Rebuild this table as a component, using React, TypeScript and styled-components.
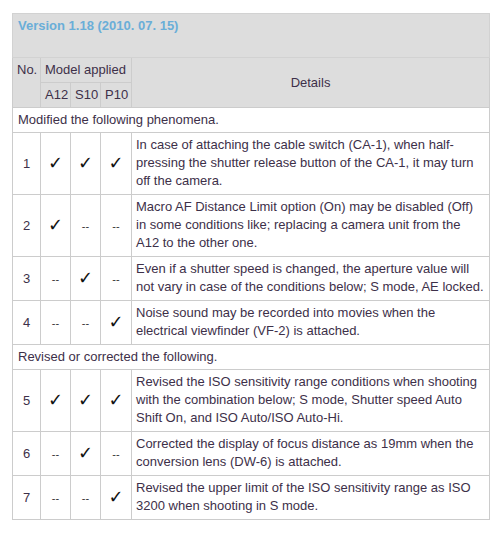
import styled, { createGlobalStyle } from 'styled-components'

const GlobalStyle = createGlobalStyle`
  body {
    margin: 0;
    background: #ffffff;
    font-family: 'Liberation Sans', Arial, sans-serif;
  }
`

const Page = styled.div`
  padding: 13px 12px 0 12px;
`

const Table = styled.table`
  width: 477px;
  table-layout: fixed;
  border-collapse: collapse;
  font-family: 'Liberation Sans', Arial, sans-serif;
  font-size: 13px;
  line-height: 18px;
  color: #3d3049;
`

const Col = styled.col<{ $w: number }>`
  width: ${(p) => p.$w}px;
`

const VersionCell = styled.th`
  box-sizing: border-box;
  background: #dddddd;
  border: 1px solid #d2d2d2;
  height: 44px;
  padding: 3px 5px 0 5px;
  vertical-align: top;
  text-align: left;
  color: #6aaed8;
  font-weight: bold;
  font-size: 13px;
`

const HeadCell = styled.th<{ $align?: string; $valign?: string }>`
  box-sizing: border-box;
  background: #dddddd;
  border: 1px solid #cccccc;
  font-weight: normal;
  height: 25px;
  padding: ${(p) => (p.$valign === 'top' ? '3px 4px 0 4px' : '0 4px')};
  text-align: ${(p) => p.$align || 'left'};
  vertical-align: ${(p) => p.$valign || 'middle'};
  white-space: nowrap;
`

const SectionCell = styled.td`
  border: 1px solid #cccccc;
  padding: 3px 5px 3px 5px;
  height: 18px;
`

const NumCell = styled.td`
  border: 1px solid #cccccc;
  text-align: center;
  vertical-align: middle;
  padding: 0;
`

const MarkCell = styled.td`
  border: 1px solid #cccccc;
  text-align: center;
  vertical-align: middle;
  padding: 0;
`

const Check = styled.span`
  font-family: 'DejaVu Sans', sans-serif;
  font-size: 18px;
  color: #111111;
`

const Dash = styled.span`
  font-size: 11px;
  color: #333333;
`

const DetailCell = styled.td`
  border: 1px solid #cccccc;
  padding: 3px 3px 4px 4px;
  vertical-align: top;
`

type Row = { no: number; marks: boolean[]; text: string }

const modified: Row[] = [
  {
    no: 1,
    marks: [true, true, true],
    text: 'In case of attaching the cable switch (CA-1), when half-pressing the shutter release button of the CA-1, it may turn off the camera.',
  },
  {
    no: 2,
    marks: [true, false, false],
    text: 'Macro AF Distance Limit option (On) may be disabled (Off) in some conditions like; replacing a camera unit from the A12 to the other one.',
  },
  {
    no: 3,
    marks: [false, true, false],
    text: 'Even if a shutter speed is changed, the aperture value will not vary in case of the conditions below; S mode, AE locked.',
  },
  {
    no: 4,
    marks: [false, false, true],
    text: 'Noise sound may be recorded into movies when the electrical viewfinder (VF-2) is attached.',
  },
]

const revised: Row[] = [
  {
    no: 5,
    marks: [true, true, true],
    text: 'Revised the ISO sensitivity range conditions when shooting with the combination below; S mode, Shutter speed Auto Shift On, and ISO Auto/ISO Auto-Hi.',
  },
  {
    no: 6,
    marks: [false, true, false],
    text: 'Corrected the display of focus distance as 19mm when the conversion lens (DW-6) is attached.',
  },
  {
    no: 7,
    marks: [false, false, true],
    text: 'Revised the upper limit of the ISO sensitivity range as ISO 3200 when shooting in S mode.',
  },
]

const ItemRow = ({ row }: { row: Row }) => (
  <tr>
    <NumCell>{row.no}</NumCell>
    {row.marks.map((m, i) => (
      <MarkCell key={i}>{m ? <Check>✓</Check> : <Dash>--</Dash>}</MarkCell>
    ))}
    <DetailCell>{row.text}</DetailCell>
  </tr>
)

export default function App() {
  return (
    <Page>
      <GlobalStyle />
      <Table>
        <colgroup>
          <Col $w={28} />
          <Col $w={30} />
          <Col $w={30} />
          <Col $w={31} />
          <Col $w={358} />
        </colgroup>
        <thead>
          <tr>
            <VersionCell colSpan={5}>Version 1.18 (2010. 07. 15)</VersionCell>
          </tr>
          <tr>
            <HeadCell rowSpan={2} $valign="top">
              No.
            </HeadCell>
            <HeadCell colSpan={3}>Model applied</HeadCell>
            <HeadCell rowSpan={2} $align="center">
              Details
            </HeadCell>
          </tr>
          <tr>
            <HeadCell>A12</HeadCell>
            <HeadCell>S10</HeadCell>
            <HeadCell>P10</HeadCell>
          </tr>
        </thead>
        <tbody>
          <tr>
            <SectionCell colSpan={5}>Modified the following phenomena.</SectionCell>
          </tr>
          {modified.map((r) => (
            <ItemRow key={r.no} row={r} />
          ))}
          <tr>
            <SectionCell colSpan={5}>Revised or corrected the following.</SectionCell>
          </tr>
          {revised.map((r) => (
            <ItemRow key={r.no} row={r} />
          ))}
        </tbody>
      </Table>
    </Page>
  )
}
